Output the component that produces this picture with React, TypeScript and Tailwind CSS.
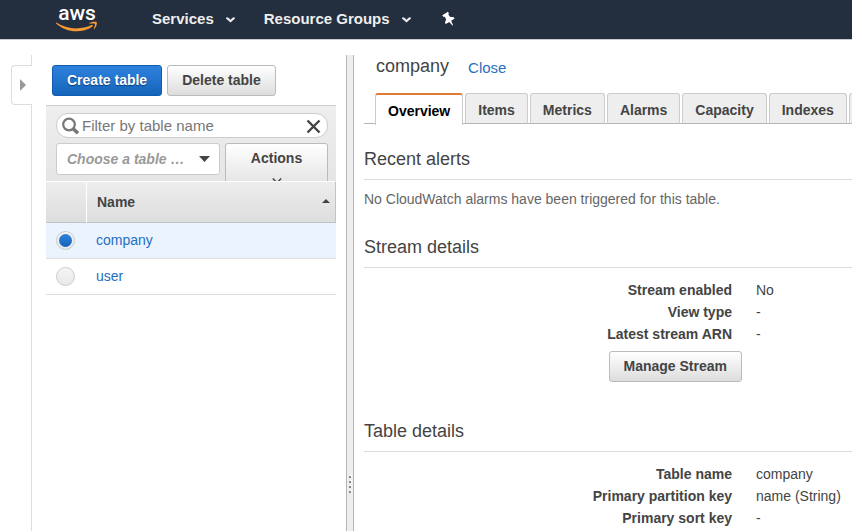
import { useState } from 'react';
import type { ReactNode } from 'react';
import { clsx } from 'clsx';

const TABLES = ['company', 'user'];
const TABS = ['Overview', 'Items', 'Metrics', 'Alarms', 'Capacity', 'Indexes'];

const STREAM_DETAILS = [
  { label: 'Stream enabled', value: 'No' },
  { label: 'View type', value: '-' },
  { label: 'Latest stream ARN', value: '-' },
];

const TABLE_DETAILS = [
  { label: 'Table name', value: 'company' },
  { label: 'Primary partition key', value: 'name (String)' },
  { label: 'Primary sort key', value: '-' },
];

function Chevron({ className }: { className?: string }) {
  return (
    <svg viewBox="0 0 9 6" className={clsx('h-[6px] w-[9px] shrink-0', className)} aria-hidden="true">
      <path d="M0 0.5H2.2L4.5 2.8L6.8 0.5H9V1.4L4.5 5.6L0 1.4Z" fill="currentColor" />
    </svg>
  );
}

function Logo() {
  return (
    <svg viewBox="0 0 42 28" className="h-7 w-[42px] overflow-visible" role="img" aria-label="aws">
      <text x="21" y="15" textAnchor="middle" fontFamily="Roboto, 'Open Sans', sans-serif" fontSize="21" fontWeight="500" fill="#fff">
        aws
      </text>
      <path d="M0.3 17.6C6 21.4 13 23.4 20 23.4C25.5 23.4 31 22.2 35.6 20.1C36.6 19.7 37.4 20.8 36.5 21.4C32 24.7 25.8 26.2 20.3 26.2C12.8 26.2 5.6 23.4 0.2 18.4C-0.2 18 0 17.4 0.3 17.6Z" fill="#f79a34" />
      <path d="M33.5 18.1C35.5 16.7 40 16.4 40.7 17.2C41.4 18.1 40.3 22.1 38.3 24C37.9 24.3 37.6 24.1 37.7 23.7C38.4 22 39.3 19.6 38.9 19C38.4 18.4 35.6 18.6 33.8 18.7C33.3 18.7 33.2 18.3 33.5 18.1Z" fill="#f79a34" />
    </svg>
  );
}

function Header() {
  return (
    <header className="flex h-10 shrink-0 items-center border-b border-[#c8cacc] bg-[#232f3e] pl-14 text-[15px] font-bold text-[#eee]">
      <a href="#home" className="pb-[2px]">
        <Logo />
      </a>
      <nav className="flex items-center pb-[2px] [text-shadow:0_1px_1px_#000]">
        <button type="button" className="ml-[54px] flex items-center gap-3">
          Services
          <Chevron className="mt-1" />
        </button>
        <button type="button" className="ml-[29px] flex items-center gap-3">
          Resource Groups
          <Chevron className="mt-1" />
        </button>
        <button type="button" aria-label="Pin shortcuts" className="ml-[31px] pt-[2px]">
          <svg viewBox="0 0 14 14" className="h-[14px] w-[14px] overflow-visible" aria-hidden="true">
            <g transform="rotate(-32 7 7)">
              <path d="M3.3 0.2H10V2L8.9 2.7V5.6L12 8V9.6H7.9L7.2 14.4H6.4L5.7 9.6H1.6V8L4.5 5.6V2.7L3.3 2Z" fill="#fff" />
            </g>
          </svg>
        </button>
      </nav>
    </header>
  );
}

function Rail() {
  return (
    <div className="flex w-8 shrink-0 flex-col">
      <div className="h-[10px] border-r border-[#ddd]" />
      <button
        type="button"
        aria-label="Expand navigation"
        className="ml-[11px] flex h-10 items-center rounded-l border border-r-0 border-[#ddd] pl-2"
      >
        <svg viewBox="0 0 6 12" className="h-3 w-[6px]" aria-hidden="true">
          <path d="M0 0L6 6L0 12Z" fill="#999" />
        </svg>
      </button>
      <div className="flex-1 border-r border-[#ddd]" />
    </div>
  );
}

function Button({ primary, children }: { primary?: boolean; children: ReactNode }) {
  return (
    <button
      type="button"
      className={clsx(
        'h-[31px] rounded-[3px] border px-[14px] pb-[2px] font-bold whitespace-nowrap',
        primary
          ? 'border-[#0f5cb0] bg-linear-to-b from-[#2e82dd] to-[#1464bb] text-white [text-shadow:0_1px_1px_#0a3d78]'
          : 'border-[#bbb] bg-linear-to-b from-white to-[#ddd] text-[#444]',
      )}
    >
      {children}
    </button>
  );
}

function Filters() {
  return (
    <div className="h-[76px] overflow-hidden border-t border-[#ccc] bg-linear-to-b from-[#eee] to-[#e5e5e5] px-[10px] pt-[7px] pr-2">
      <div className="flex h-[25px] items-center rounded-xl border border-[#ccc] bg-white pr-[6px] pl-[5px]">
        <svg viewBox="0 0 18 18" className="h-[18px] w-[18px] shrink-0" fill="none" stroke="#777" aria-hidden="true">
          <circle cx="7" cy="7.5" r="5.8" strokeWidth="2.2" />
          <path d="M11.2 11.7L16 16.3" strokeWidth="3.5" />
        </svg>
        <input
          type="text"
          aria-label="Filter by table name"
          placeholder="Filter by table name"
          className="min-w-0 flex-1 pl-[2px] text-[15px] outline-none placeholder:text-[#777]"
        />
        <button type="button" aria-label="Clear filter" className="pt-[2px]">
          <svg viewBox="0 0 15 15" className="h-[15px] w-[15px]" aria-hidden="true">
            <path d="M1.5 1.5L13.5 13.5M13.5 1.5L1.5 13.5" stroke="#444" strokeWidth="2.4" />
          </svg>
        </button>
      </div>
      <div className="mt-[5px] flex items-start gap-[5px]">
        <div className="relative min-w-0 flex-1">
          <select
            aria-label="Choose a table group"
            className="h-8 w-full appearance-none rounded-[3px] border border-[#ccc] bg-white pl-[10px] font-bold text-[#999] italic"
          >
            <option>Choose a table …</option>
          </select>
          <svg viewBox="0 0 11 6" className="pointer-events-none absolute top-[13px] right-[10px] h-[6px] w-[11px]" aria-hidden="true">
            <path d="M0 0H11L5.5 6Z" fill="#444" />
          </svg>
        </div>
        <button
          type="button"
          className="flex h-[52px] w-[103px] flex-col items-center rounded-[3px] border border-[#bbb] bg-linear-to-b from-white to-[#ddd] pt-1 font-bold"
        >
          Actions
          <svg viewBox="0 0 10 7" className="mt-[10px] h-[7px] w-[10px]" aria-hidden="true">
            <path d="M0.8 0.4L5 4.8L9.2 0.4" fill="none" stroke="#444" strokeWidth="1.4" />
          </svg>
        </button>
      </div>
    </div>
  );
}

function TableList({ selected, onSelect }: { selected: string; onSelect: (name: string) => void }) {
  return (
    <table className="w-full border-separate border-spacing-0">
      <thead>
        <tr className="h-[42px] bg-linear-to-b from-[#eee] to-[#ddd] text-left">
          <th className="w-10 border-t border-b border-t-white border-b-[#c4c4c4]" aria-label="Selected" />
          <th className="border-t border-r border-b border-l border-t-white border-r-[#c4c4c4] border-b-[#c4c4c4] border-l-white pr-[5px] pl-[10px]">
            <div className="flex items-center justify-between">
              Name
              <svg viewBox="0 0 8 4" className="mb-[2px] h-1 w-2" aria-hidden="true">
                <path d="M4 0L8 4H0Z" fill="#444" />
              </svg>
            </div>
          </th>
        </tr>
      </thead>
      <tbody>
        {TABLES.map((name) => (
          <tr key={name} className={clsx('h-9', name === selected && 'bg-[#eaf3fe]')}>
            <td className="border-b border-[#ddd] pl-[10px]">
              <input
                type="radio"
                name="table"
                aria-label={name}
                checked={name === selected}
                onChange={() => onSelect(name)}
                className="block h-[19px] w-[19px] appearance-none rounded-full border border-[#ccc] bg-linear-to-b from-[#f5f5f5] to-[#e8e8e8] p-[2px] before:block before:h-[13px] before:w-[13px] before:rounded-full checked:before:bg-linear-to-b checked:before:from-[#2e82dd] checked:before:to-[#1464bb]"
              />
            </td>
            <td className="border-b border-[#ddd] pb-[2px] pl-[10px]">
              <a href={`#${name}`} className="text-[#1f6fc0]">
                {name}
              </a>
            </td>
          </tr>
        ))}
      </tbody>
    </table>
  );
}

function Splitter() {
  return (
    <div className="relative ml-[10px] w-2 shrink-0 border-x border-[#b5b5b5] bg-[#eee]">
      {/* Drag handle */}
      <div className="absolute top-[421px] left-[2px] flex flex-col gap-[3px]">
        {[0, 1, 2, 3].map((dot) => (
          <span key={dot} className="h-[2px] w-[2px] bg-[#888] shadow-[1px_-1px_0_#fff]" />
        ))}
      </div>
    </div>
  );
}

function Tabs() {
  const [active, setActive] = useState('Overview');

  return (
    <div role="tablist" className="flex h-8 items-start gap-[2px] overflow-hidden bg-[linear-gradient(#b5b5b5,#b5b5b5)] bg-[length:100%_1px] bg-[position:0_30px] bg-no-repeat pl-[11px]">
      {TABS.map((tab) => (
        <button
          key={tab}
          type="button"
          role="tab"
          aria-selected={tab === active}
          onClick={() => setActive(tab)}
          className={clsx(
            'shrink-0 rounded-t-[3px] border border-[#ccc] px-3 font-bold',
            tab === active
              ? 'h-8 border-t-2 border-b-0 border-t-[#e07b33] bg-white pt-[2px] text-black'
              : 'h-[31px] border-b-[#b5b5b5] bg-[#eee] pt-[2px]',
          )}
        >
          {tab}
        </button>
      ))}
      <button type="button" role="tab" aria-label="More" className="h-[31px] w-20 shrink-0 rounded-t-[3px] border border-[#ccc] border-b-[#b5b5b5] bg-[#eee]" />
    </div>
  );
}

function SectionTitle({ children }: { children: ReactNode }) {
  return <h2 className="border-b border-[#ddd] pb-2 text-lg leading-6">{children}</h2>;
}

function DetailRows({ rows }: { rows: { label: string; value: string }[] }) {
  return (
    <dl className="pt-[11px] leading-[22px]">
      {rows.map(({ label, value }) => (
        <div key={label} className="flex gap-6">
          <dt className="w-[368px] shrink-0 text-right font-bold">{label}</dt>
          <dd className="whitespace-nowrap">{value}</dd>
        </div>
      ))}
    </dl>
  );
}

function App() {
  const [selected, setSelected] = useState('company');

  return (
    <div className="flex min-h-screen flex-col overflow-x-hidden bg-white font-['Liberation_Sans',Arial,sans-serif] text-sm text-[#444]">
      <Header />
      <div className="flex flex-1 pt-[15px]">
        <Rail />
        <aside className="ml-[14px] w-[290px] shrink-0 pt-[10px]">
          <div className="flex gap-[5px] pb-[9px] pl-[6px]">
            <Button primary>Create table</Button>
            <Button>Delete table</Button>
          </div>
          <Filters />
          <TableList selected={selected} onSelect={setSelected} />
        </aside>
        <Splitter />
        <main className="ml-[10px] min-w-0 flex-1">
          <div className="flex items-start pb-3 pl-3">
            <h1 className="text-lg leading-[22px]">{selected}</h1>
            <a href="#tables" className="ml-[19px] text-[15px] leading-[26px] text-[#2a6fbf]">
              Close
            </a>
          </div>
          <Tabs />
          <section className="pt-[22px]">
            <SectionTitle>Recent alerts</SectionTitle>
            <p className="pt-2 leading-[22px] text-[#666]">No CloudWatch alarms have been triggered for this table.</p>
          </section>
          <section className="pt-[25px]">
            <SectionTitle>Stream details</SectionTitle>
            <DetailRows rows={STREAM_DETAILS} />
            <div className="w-[378px] pt-[6px] text-right">
              <Button>Manage Stream</Button>
            </div>
          </section>
          <section className="pt-[37px]">
            <SectionTitle>Table details</SectionTitle>
            <DetailRows rows={TABLE_DETAILS} />
          </section>
        </main>
      </div>
    </div>
  );
}

export default App;
